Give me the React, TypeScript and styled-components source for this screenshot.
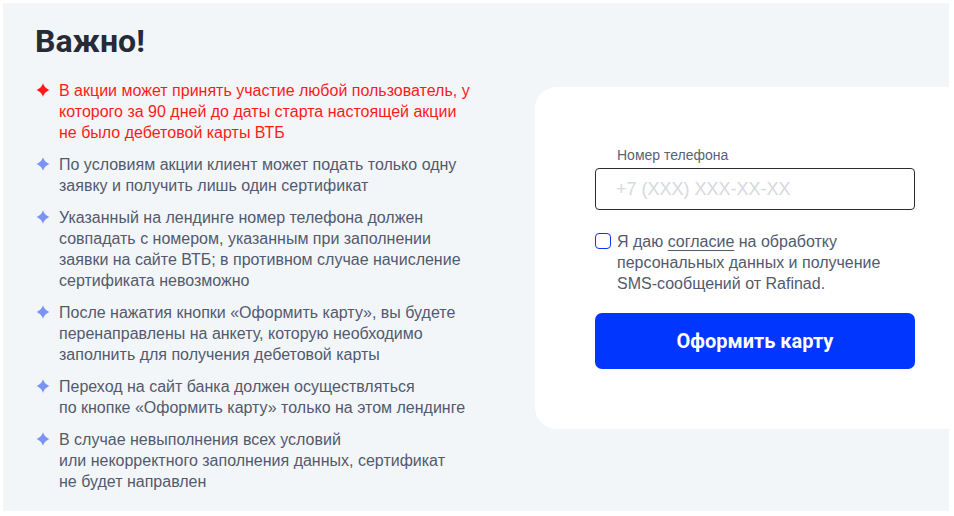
import * as React from "react";
import styled, { createGlobalStyle } from "styled-components";

const GlobalStyle = createGlobalStyle`
  html, body {
    margin: 0;
    padding: 0;
    background: #ffffff;
  }
  * {
    box-sizing: border-box;
  }
`;

const Page = styled.div`
  width: 954px;
  height: 516px;
  padding: 3px 5px 5px 3px;
`;

const Panel = styled.section`
  height: 508px;
  background: #f3f6f9;
  overflow: hidden;
  padding: 18px 0 0 32px;
  font-family: "Liberation Sans", Arial, sans-serif;
`;

const Title = styled.h2`
  margin: 0;
  font-family: Roboto, "Liberation Sans", sans-serif;
  font-weight: 700;
  font-size: 32px;
  line-height: 40px;
  color: #262b36;
`;

const Body = styled.div`
  display: flex;
  align-items: flex-start;
  gap: 24px;
  margin-top: 19px;
`;

const Rules = styled.ul`
  flex: 0 0 476px;
  list-style: none;
  margin: 0;
  padding: 0;
  display: flex;
  flex-direction: column;
  gap: 11px;
`;

const Rule = styled.li<{ $accent?: boolean }>`
  display: flex;
  align-items: flex-start;
  gap: 9px;
  font-size: 16px;
  line-height: 21px;
  color: ${(p) => (p.$accent ? "#ff1a1a" : "#525a6e")};
`;

const RuleText = styled.span`
  width: 414px;
`;

const Star = styled.svg<{ $accent?: boolean }>`
  flex: 0 0 14px;
  width: 14px;
  height: 14px;
  margin: 3px 0 0 1px;
  fill: ${(p) => (p.$accent ? "#ff1a1a" : "#7b93f5")};
`;

const Card = styled.div`
  flex: 0 0 440px;
  margin-top: 7px;
  background: #ffffff;
  border-radius: 22px;
  padding: 60px;
  display: flex;
  flex-direction: column;
`;

const Label = styled.label`
  font-size: 14px;
  line-height: 16px;
  color: #5a6275;
  padding-left: 22px;
  margin-bottom: 5px;
`;

const PhoneInput = styled.input`
  width: 320px;
  height: 42px;
  border: 1px solid #2b2d33;
  border-radius: 4px;
  padding: 0 20px;
  font-family: "Liberation Sans", Arial, sans-serif;
  font-size: 18px;
  color: #262b36;
  background: #ffffff;
  outline: none;
  &::placeholder {
    color: #d5d9e0;
  }
`;

const Consent = styled.div`
  display: flex;
  align-items: flex-start;
  gap: 6px;
  margin-top: 21px;
  font-size: 16px;
  line-height: 21px;
  color: #525a6e;
`;

const Check = styled.span`
  flex: 0 0 16px;
  width: 16px;
  height: 16px;
  margin-top: 2px;
  border: 1.5px solid #0a35ff;
  border-radius: 4px;
  background: #ffffff;
`;

const Link = styled.a`
  color: inherit;
  text-decoration: underline;
  text-underline-offset: 3px;
  text-decoration-thickness: 1px;
`;

const Submit = styled.button`
  margin-top: 19px;
  width: 320px;
  height: 56px;
  border: 0;
  border-radius: 7px;
  background: #0036ff;
  color: #ffffff;
  font-family: Roboto, "Liberation Sans", sans-serif;
  font-weight: 700;
  font-size: 20px;
  cursor: pointer;
`;

const rules: { text: React.ReactNode; accent?: boolean }[] = [
  {
    accent: true,
    text: "В акции может принять участие любой пользователь, у которого за 90 дней до даты старта настоящей акции не было дебетовой карты ВТБ",
  },
  {
    text: "По условиям акции клиент может подать только одну заявку и получить лишь один сертификат",
  },
  {
    text: "Указанный на лендинге номер телефона должен совпадать с номером, указанным при заполнении заявки на сайте ВТБ; в противном случае начисление сертификата невозможно",
  },
  {
    text: "После нажатия кнопки «Оформить карту», вы будете перенаправлены на анкету, которую необходимо заполнить для получения дебетовой карты",
  },
  {
    text: (
      <>
        Переход на сайт банка должен осуществляться
        <br />
        по кнопке «Оформить карту» только на этом лендинге
      </>
    ),
  },
  {
    text: (
      <>
        В случае невыполнения всех условий
        <br />
        или некорректного заполнения данных, сертификат
        <br />
        не будет направлен
      </>
    ),
  },
];

function Sparkle(props: { accent?: boolean }) {
  return (
    <Star $accent={props.accent} viewBox="0 0 14 14">
      <path d="M7 0C7.6 3.2 10.8 6.4 14 7C10.8 7.6 7.6 10.8 7 14C6.4 10.8 3.2 7.6 0 7C3.2 6.4 6.4 3.2 7 0Z" />
    </Star>
  );
}

export default function App() {
  return (
    <>
      <GlobalStyle />
      <Page>
        <Panel>
          <Title>Важно!</Title>
          <Body>
            <Rules>
              {rules.map((rule, i) => (
                <Rule key={i} $accent={rule.accent}>
                  <Sparkle accent={rule.accent} />
                  <RuleText>{rule.text}</RuleText>
                </Rule>
              ))}
            </Rules>
            <Card>
              <Label htmlFor="phone">Номер телефона</Label>
              <PhoneInput id="phone" placeholder="+7 (XXX) XXX-XX-XX" />
              <Consent>
                <Check />
                <span>
                  Я даю <Link href="#">согласие</Link> на обработку
                  <br />
                  персональных данных и получение
                  <br />
                  SMS-сообщений от Rafinad.
                </span>
              </Consent>
              <Submit>Оформить карту</Submit>
            </Card>
          </Body>
        </Panel>
      </Page>
    </>
  );
}
